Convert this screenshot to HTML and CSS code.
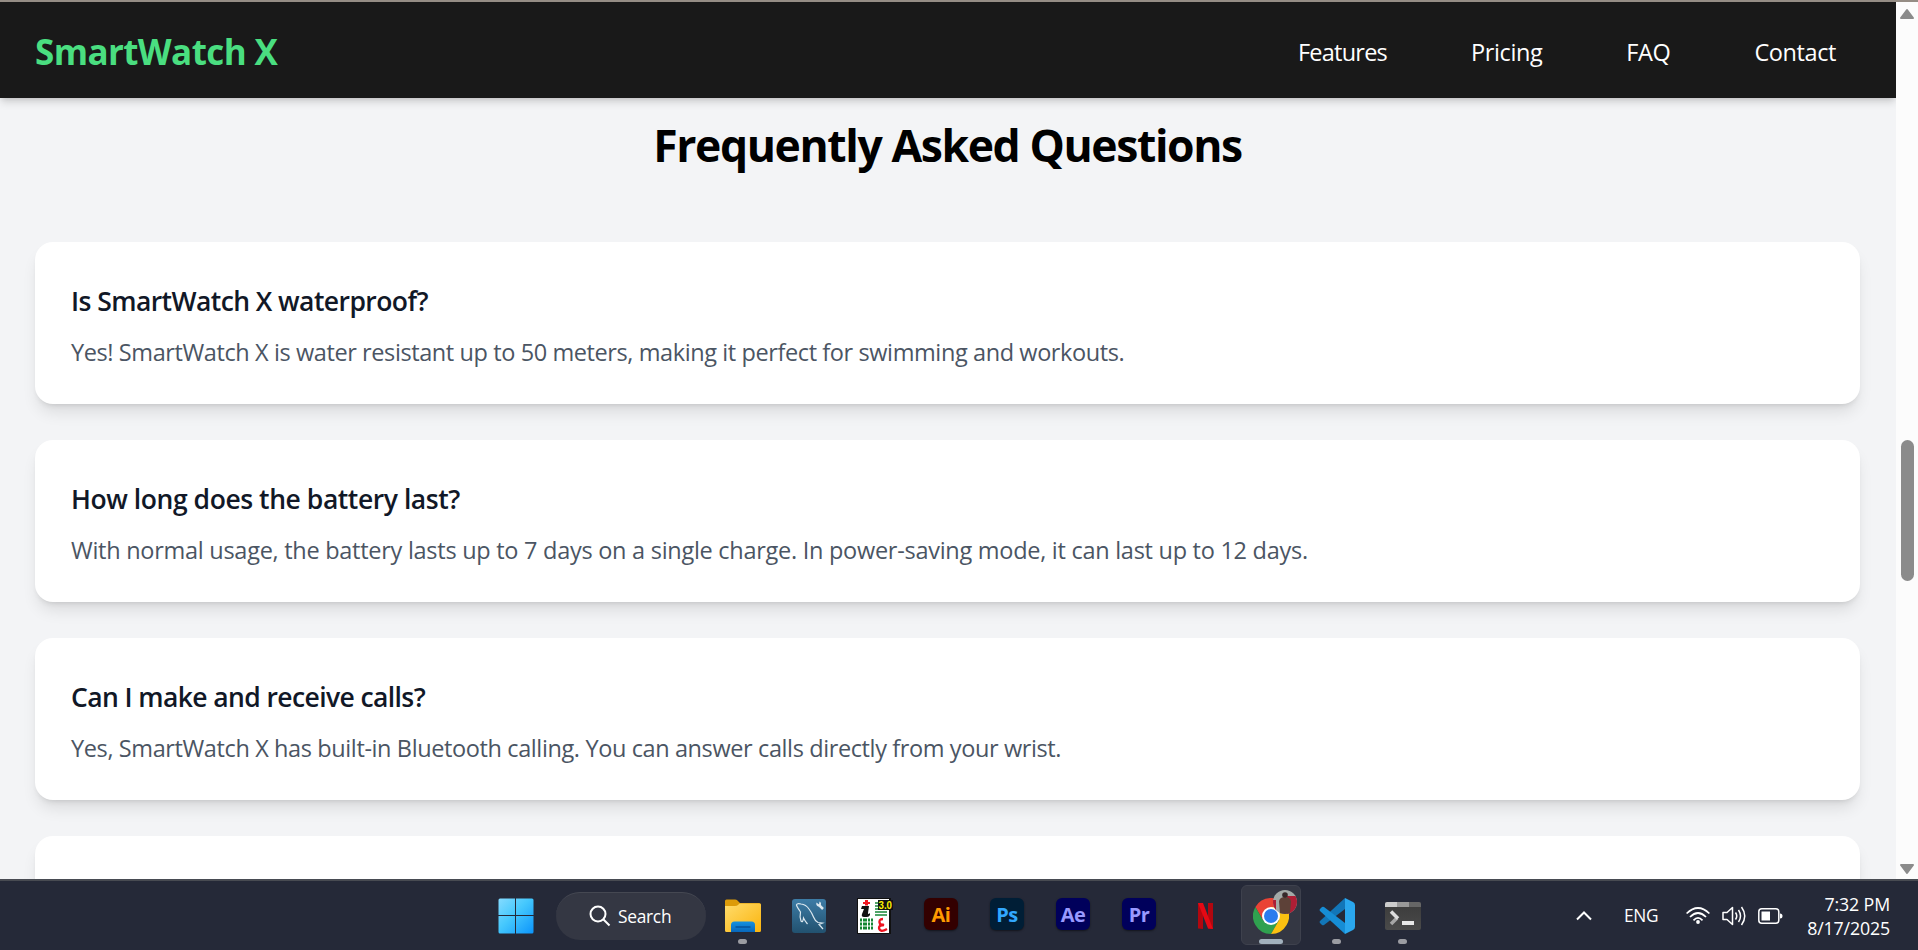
FILE: index.html
```html
<!DOCTYPE html>
<html lang="en">
<head>
<meta charset="utf-8">
<title>SmartWatch X</title>
<link rel="stylesheet" href="styles.css">
</head>
<body>
<div class="screen">
  <div class="browser">
    <div class="page">
      <header class="navbar">
        <div class="logo"><span>SmartWatch X</span></div>
        <nav class="links">
          <a class="l-features">Features</a><a class="l-pricing">Pricing</a><a class="l-faq">FAQ</a><a class="l-contact">Contact</a>
        </nav>
      </header>
      <main class="faq">
        <h2>Frequently Asked Questions</h2>
        <div class="list">
          <article class="card"><h3 class="t1">Is SmartWatch X waterproof?</h3><p class="p1">Yes! SmartWatch X is water resistant up to 50 meters, making it perfect for swimming and workouts.</p></article>
          <article class="card"><h3 class="t2">How long does the battery last?</h3><p class="p2">With normal usage, the battery lasts up to 7 days on a single charge. In power-saving mode, it can last up to 12 days.</p></article>
          <article class="card"><h3 class="t3">Can I make and receive calls?</h3><p class="p3">Yes, SmartWatch X has built-in Bluetooth calling. You can answer calls directly from your wrist.</p></article>
          <article class="card"></article>
        </div>
      </main>
    </div>
    <div class="scrollbar">
      <svg width="16" height="12" viewBox="0 0 16 12"><path d="M8 2 14 10H2Z" fill="#8b8b8b" stroke="#8b8b8b" stroke-width="2" stroke-linejoin="round"/></svg>
      <div class="thumb"></div>
      <svg width="16" height="12" viewBox="0 0 16 12"><path d="M2 2H14L8 10Z" fill="#8b8b8b" stroke="#8b8b8b" stroke-width="2" stroke-linejoin="round"/></svg>
    </div>
  </div>
  <footer class="taskbar">
    <div class="apps">
      <div class="cell">
        <svg width="36" height="36" viewBox="0 0 36 36"><defs><linearGradient id="win" gradientUnits="userSpaceOnUse" x1="0" y1="0" x2="36" y2="36"><stop offset="0" stop-color="#87dcff"/><stop offset=".45" stop-color="#45c8fd"/><stop offset="1" stop-color="#0a93fb"/></linearGradient></defs><path fill="url(#win)" d="M2 .5H17V17H.5V2Q.5.500 2 .5ZM18 .5H34Q35.500.5 35.500 2V17H18ZM.5 18H17V35.500H2Q.5 35.500.5 34ZM18 18H35.500V34Q35.500 35.500 34 35.500H18Z"/></svg>
      </div>
      <div class="search">
        <svg width="22" height="22" viewBox="0 0 22 22" fill="none" stroke="#fff" stroke-width="2"><circle cx="9" cy="9" r="7.500"/><path d="m14.500 14.500 6 6"/></svg>
        <span>Search</span>
      </div>
      <div class="cell">
        <svg width="36" height="34" viewBox="0 0 36 34"><defs><linearGradient id="fold" x2="1" y2="1"><stop stop-color="#ffdc6c"/><stop offset="1" stop-color="#fbb40d"/></linearGradient><linearGradient id="fb" x2="0" y2="1"><stop stop-color="#1592e0"/><stop offset="1" stop-color="#0867bb"/></linearGradient></defs><path fill="#dc9b09" d="M0 2Q0 .5 1.500.5H10Q11.500.5 12.500 1.500L15 4H34Q36 4 36 6V12H0Z"/><path fill="url(#fold)" d="M0 7H10Q12 7 13 6L14.500 4.500H34.500Q36 4.500 36 6V31.500Q36 33 34.500 33H1.500Q0 33 0 31.500Z"/><path fill="url(#fb)" d="M6 33V26Q6 22.500 9.500 22.500H26.500Q30 22.500 30 26V33Z"/><path d="M10.500 28H25.500" stroke="#07539a" stroke-width="1.500"/></svg>
        <i class="dot"></i>
      </div>
      <div class="cell">
        <svg width="34" height="34" viewBox="0 0 34 34"><defs><linearGradient id="sql" x2="0" y2="1"><stop stop-color="#3d7ca6"/><stop offset="1" stop-color="#22516f"/></linearGradient></defs><rect width="34" height="34" rx="3" fill="url(#sql)"/><path d="M15.500 25Q13 22 11.500 19Q11 24 9 22Q7.500 18 8.500 13Q5 8 4.500 6Q5 4 9 5Q14 5.500 17 10Q20 14 21.500 18Q23 22 26 23.500L30.500 24L27 25.500L31 30" fill="none" stroke="#dce8ef" stroke-width="1.200"/><path d="m26.500 5.500 4.500 4.500" stroke="#dce8ef" stroke-width="2.500"/><path d="M24.500 3.500 27 5.500 27.500 2.500Q30 4 28.500 6.500L26.500 7.500Q23.500 6.500 24.500 3.500Z" fill="#dce8ef"/></svg>
      </div>
      <div class="cell">
        <svg width="36" height="36" viewBox="0 0 36 36"><path fill="#111" d="M0 0H34V36H0Z"/><path fill="#fff" d="M1 1H32V35H1Z"/><path fill="#f01822" d="M8 2h3v2h2v2h-2v1.500H8V6H6V4h2Z"/><path d="M5 8h7l-1 7q0 2 2 0v2q-1 2-3 2H7q-3 0-2-3l2-5H4Z" fill="#111"/><path d="M18 5h3M18 8h3M18 11h3M18 14h12M18 17h12" stroke="#188738" stroke-width="1.300"/><path d="M3 22h13M3 26h13M3 30h13" stroke="#158532" stroke-width="2.800" stroke-dasharray="2 1 4 1"/><path d="M26 21q-5 0-3 5l4 1q-5 0-5 3 1 5 8 1" stroke="#ee1420" stroke-width="2.300" fill="none"/><path d="M21 2H36V12H21Z" fill="#111"/><text x="21.500" y="11" textLength="13.500" lengthAdjust="spacingAndGlyphs" class="badge">3.0</text></svg>
      </div>
      <div class="cell"><span class="adobe ai">Ai</span></div>
      <div class="cell"><span class="adobe ps">Ps</span></div>
      <div class="cell"><span class="adobe ae">Ae</span></div>
      <div class="cell"><span class="adobe pr">Pr</span></div>
      <div class="cell">
        <svg width="15" height="26" viewBox="0 0 15 26"><path fill="#b2070f" d="M0 0H5V26L0 25.500ZM10 0H15V26L10 25.500Z"/><path fill="#e50914" d="M0 0H5L15 26 10 25.500Z"/></svg>
      </div>
      <div class="cell">
        <div class="tile"></div>
        <svg class="chrome" width="36" height="36" viewBox="0 0 36 36"><path fill="#ea4335" d="M2.400 9A18 18 0 0 1 33.600 9H18L10.200 22.500Z"/><path fill="#2fa14f" d="M2.400 9A18 18 0 0 0 18 36L25.800 22.500H10.200Z"/><path fill="#fcc111" d="M33.600 9A18 18 0 0 1 18 36L25.800 22.500 18 9Z"/><circle cx="18" cy="18" r="9" fill="#fff"/><circle cx="18" cy="18" r="7" fill="#2b7cee"/></svg>
        <svg class="avatar" width="24" height="24" viewBox="0 0 24 24"><defs><clipPath id="av"><circle cx="12" cy="12" r="12"/></clipPath></defs><g clip-path="url(#av)"><path fill="#a3aaa8" d="M0 0H24V24H0Z"/><path fill="#ae1e35" d="M14 6H24V24H14ZM0 10H3V24H0Z"/><path fill="#5d4138" d="M6 11Q7 7 12 7T18 11L17 24H7Z"/><circle cx="12" cy="5" r="2.800" fill="#35292a"/></g></svg>
        <i class="dot wide"></i>
      </div>
      <div class="cell">
        <svg width="36" height="36" viewBox="0 0 36 36"><path fill="#1276b8" d="M26 0 1 23Q0 24 1 25L3 27Q4 27.500 5 27L26 11Z"/><path fill="#168dd5" d="M26 36 1 13Q0 12 1 11L3 9Q4 8.500 5 9L26 25Z"/><path fill="#2aa7ee" d="M26 0 34 4Q36 5 36 7V29Q36 31 34 32L26 36Z"/></svg>
        <i class="dot"></i>
      </div>
      <div class="cell">
        <svg width="36" height="28" viewBox="0 0 36 28"><defs><linearGradient id="tm" x2="0" y2="1"><stop stop-color="#3b3b3b"/><stop offset="1" stop-color="#4a4a4a"/></linearGradient></defs><rect width="36" height="28" rx="2" fill="url(#tm)"/><path fill="#ccc" d="M2 0H12V5H0V2Q0 0 2 0Z"/><path fill="#999" d="M12 0H24V5H12Z"/><path fill="#666" d="M24 0H34Q36 0 36 2V5H24Z"/><path d="m6 22 6-6" stroke="#a5a5a5" stroke-width="3.500"/><path d="m6 9.500 7 7" stroke="#dcdcdc" stroke-width="3.500"/><path fill="#e8e8e8" d="M17 19H29V23H17Z"/></svg>
        <i class="dot"></i>
      </div>
    </div>
    <div class="tray">
      <svg class="chev" width="16" height="10" viewBox="0 0 16 10" fill="none" stroke="#fff" stroke-width="2"><path d="m1 8.500 7-7 7 7"/></svg>
      <span class="lang">ENG</span>
      <svg class="wifi" width="24" height="18" viewBox="0 0 24 18" fill="none" stroke="#fff" stroke-width="1.700"><path d="M.6 6.500Q12-4.500 23.400 6.500M4 10Q12 2 20 10M7.500 13.300Q12 8.500 16.500 13.300"/><circle cx="12" cy="15" r="1.900" fill="#fff" stroke="none"/></svg>
      <svg class="vol" width="24" height="20" viewBox="0 0 24 20" fill="none" stroke="#fff" stroke-width="1.500" stroke-linejoin="round"><path d="M1 6.500H5L10.500 1.500V18.500L5 13.500H1ZM13.500 6.500Q16 10 13.500 13.500M16.500 4Q20.500 10 16.500 16M19.500 1Q26 10 19.500 19"/></svg>
      <svg class="bat" width="25" height="16" viewBox="0 0 25 16" fill="none" stroke="#fff" stroke-width="1.500"><rect x=".8" y=".8" width="20" height="14.400" rx="3"/><path fill="#fff" stroke="none" d="M3.500 3.500H12V12.500H3.500ZM22 5.500Q24.500 5.500 24.500 8T22 10.500Z"/></svg>
      <div class="clock"><span class="time">7:32 PM</span><span class="date">8/17/2025</span></div>
    </div>
  </footer>
</div>
</body>
</html>
```
FILE: styles.css
```css
* { box-sizing: border-box; }
body { margin: 0; font-family: "Open Sans", "Noto Sans", sans-serif; overflow: hidden; }
h2, h3, p { margin: 0; white-space: nowrap; }
svg { display: block; flex: none; }
.screen { width: 1918px; height: 950px; display: flex; flex-direction: column; }
.browser { height: 879px; display: flex; border-top: 2px solid #958d85; overflow: hidden; }
.page { width: 1896px; background: #f3f4f6; overflow: hidden; }
.navbar { position: relative; height: 96px; padding: 3px 60px 0 35px; display: flex; align-items: center; justify-content: space-between; background: #191919; color: #fff; box-shadow: 0 5px 8px -1px rgba(0,0,0,.15), 0 2px 5px -2px rgba(0,0,0,.12); }
.logo { font-size: 35px; font-weight: 700; color: #4ade80; letter-spacing: -.6px; line-height: 48px; white-space: nowrap; }
.links { display: flex; gap: 84px; font-size: 23.5px; line-height: 32px; letter-spacing: -.4px; }
.l-features { letter-spacing: -.75px; }
.faq { padding: 20px 36px 0 35px; }
h2 { font-size: 44.5px; line-height: 54px; font-weight: 700; text-align: center; letter-spacing: -1.4px; }
.list { margin-top: 70px; display: grid; gap: 36px; }
.card { height: 162px; padding: 38px 36px; background: #fff; border-radius: 18px; box-shadow: 0 11px 16px -3px rgba(0,0,0,.1), 0 4px 6px -4px rgba(0,0,0,.16); }
h3 { font-size: 26.5px; line-height: 42px; font-weight: 600; color: #111827; }
.t1 { letter-spacing: -.57px; }
.t2 { letter-spacing: -.44px; }
.t3 { letter-spacing: -.6px; }
p { margin-top: 12px; font-size: 23.5px; line-height: 36px; color: #4b5563; }
.p1 { letter-spacing: -.4px; }
.p2 { letter-spacing: -.27px; }
.p3 { letter-spacing: -.385px; }
.scrollbar { width: 22px; background: #fcfcfc; display: flex; flex-direction: column; align-items: center; padding: 6px 0 4px; }
.thumb { width: 13px; height: 141px; margin: 420px 0 auto 1px; border-radius: 7px; background: #8b8b8b; }
.taskbar { position: relative; height: 71px; background: #252938; border-top: 2px solid #484b52; color: #fff; display: flex; justify-content: space-between; }
.apps { display: flex; align-items: center; margin-left: 483px; height: 69px; }
.cell { position: relative; width: 66px; height: 69px; display: flex; align-items: center; justify-content: center; }
.search { width: 150px; height: 48px; margin: 0 4px 0 7px; border-radius: 24px; background: #343743; border-top: 1px solid #454852; display: flex; align-items: center; padding-left: 33px; gap: 7px; font-size: 17.4px; letter-spacing: -.3px; }
.dot { position: absolute; bottom: 6px; left: 28px; width: 9px; height: 5px; border-radius: 3px; background: #9b9ca2; }
.dot.wide { left: 21px; width: 24px; background: #a2b1bd; }
.adobe { width: 34px; height: 32px; margin-bottom: 3px; border-radius: 6px; display: flex; align-items: center; justify-content: center; font-size: 20px; font-weight: 700; letter-spacing: -.5px; box-shadow: 0 1px 2px rgba(0,0,0,.5); }
.ai { background: #330000; color: #ff9a00; }
.ps { background: #001e36; color: #31a8ff; }
.ae, .pr { background: #00005b; color: #9999ff; }
.tile { position: absolute; left: 3px; top: 4px; width: 60px; height: 60px; border-radius: 6px; background: #343743; border: 1px solid #3e414d; }
.chrome { position: relative; }
.avatar { position: absolute; left: 35px; top: 9px; }
.badge { font: bold 11px "Liberation Sans", sans-serif; fill: #fff200; }
.tray { display: flex; align-items: center; height: 69px; padding-right: 28px; }
.lang { font-size: 17.3px; letter-spacing: -.3px; margin-left: 32px; width: 62px; }
.vol { margin-left: 12px; }
.bat { margin-left: 12px; }
.clock { width: 107px; display: flex; flex-direction: column; align-items: flex-end; font-size: 17.8px; line-height: 24px; letter-spacing: -.15px; }
```
